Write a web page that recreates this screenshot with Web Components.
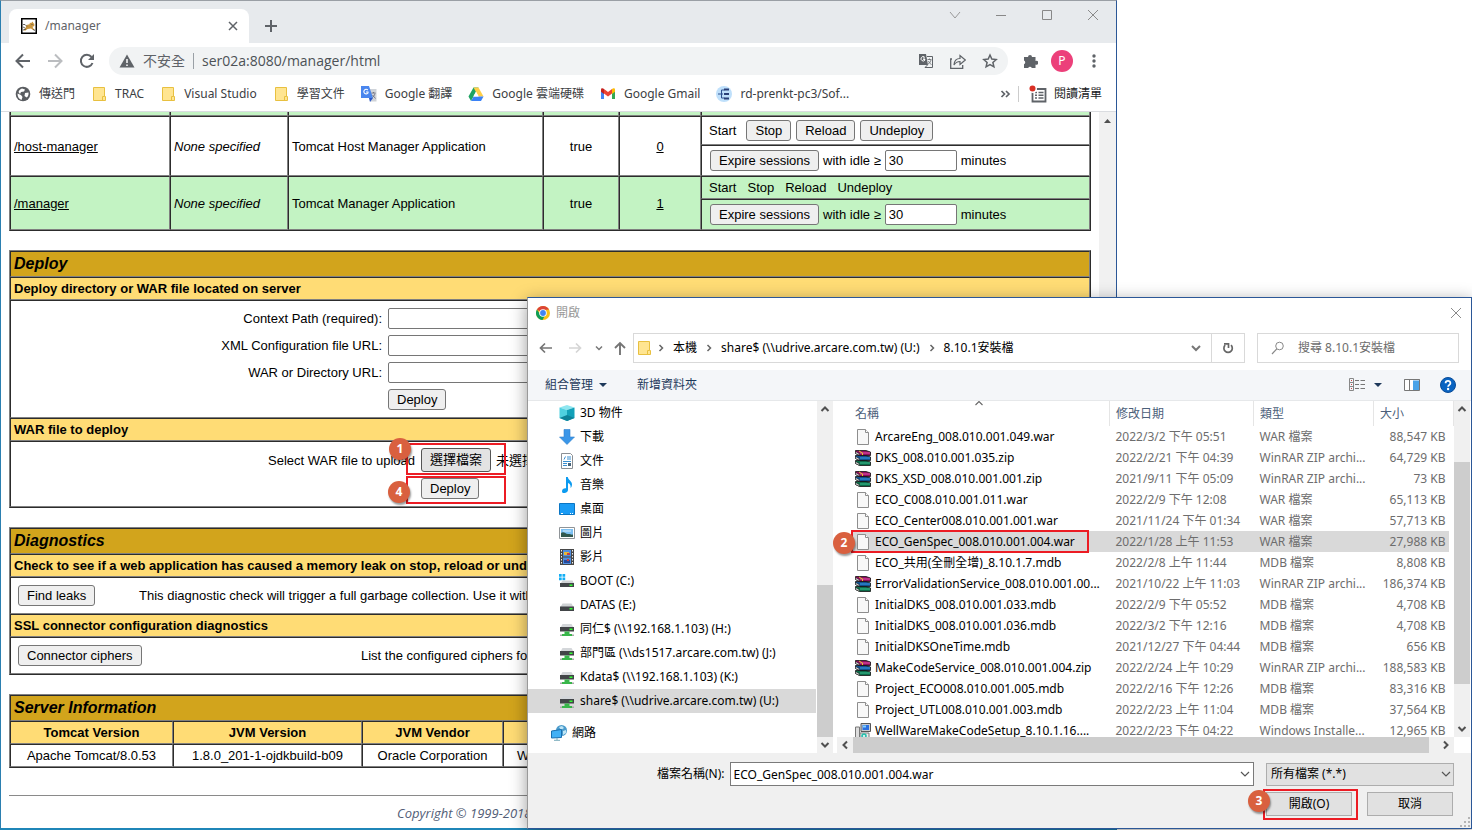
<!DOCTYPE html>
<html lang="zh-Hant">
<head>
<meta charset="utf-8">
<title>/manager</title>
<style>
html, body { margin: 0; background: #fff; }
body { font-family: "Noto Sans", "Noto Sans CJK TC", sans-serif; font-size: 12px; line-height: 16px; color: #000; }
</style>
</head>
<body>
<desk-top></desk-top>
<script>
const define = (name, html, after) => {
  const tpl = document.createElement('template');
  tpl.innerHTML = html;
  customElements.define(name, class extends HTMLElement {
    constructor() {
      super();
      this.attachShadow({ mode: 'open' }).append(tpl.content.cloneNode(true));
    }
    connectedCallback() { if (after && !this.ready) { this.ready = true; after(this, this.shadowRoot); } }
  });
};

/* ---------- icons: [viewBox width, height, markup] ---------- */
const book = (y, light, dark) => `<path d="M.5 ${y + .5}h10.500l4.500 1.500v3.500H4.500L.5 ${y + 3.500}z" fill="${dark}" stroke="#111" stroke-width=".8"/><path d="M5 ${y + 3}h10" stroke="${light}" stroke-width="1.500"/><path d="M.5 ${y + 1.500}l3.800 2.200v1.500L.5 ${y + 3.500}z" fill="#e8e8e8" stroke="#111" stroke-width=".5"/>`;
const ICONS = {
  tomcat: [16, 16, '<rect x=".75" y=".75" width="14.500" height="14.500" fill="#fff" stroke="#000" stroke-width="1.500"/><path d="M9 4.500l1 .7 1.500-1.700.8 1.500 1 1v2l-1.800.8 1 2 1.500 1.200h-2l-2-1.500-3.500.5-2 1.500H2.500l2-2.500 1-3 3-.8z" fill="#c9963f"/><path d="M2 6.500h2l2 2M2 9l2 1M2 12l3-1M10.500 6.500h1M12 11.500l2 1" stroke="#444" stroke-width=".8" fill="none"/>'],
  close: [16, 16, '<path d="M4 4l8 8M12 4l-8 8" stroke="#5f6368" stroke-width="1.500"/>'],
  plus: [16, 16, '<path d="M8 2v12M2 8h12" stroke="#5f6368" stroke-width="2"/>'],
  wdown: [16, 16, '<path d="M3 5l5 6 5-6" stroke="#999" fill="none"/>'],
  wmin: [16, 16, '<path d="M3 8.500h10" stroke="#888"/>'],
  wmax: [16, 16, '<path d="M3.500 3.500h9v9h-9z" stroke="#888" fill="none"/>'],
  wclose: [16, 16, '<path d="M3 3l10 10M13 3L3 13" stroke="#8a8a8a"/>'],
  back: [16, 16, '<path d="M15 8H2M8 1.500L1.500 8 8 14.500" fill="none" stroke="#5f6368" stroke-width="2"/>'],
  fwd: [16, 16, '<path d="M1 8h13M8 1.500L14.500 8 8 14.500" fill="none" stroke="#bbbdc0" stroke-width="2"/>'],
  reload: [16, 16, '<path d="M13.500 10A6 6 0 1 1 12.500 4" fill="none" stroke="#5f6368" stroke-width="2"/><path d="M15 1v6H9z" fill="#5f6368"/>'],
  warn: [16, 16, '<path d="M8 1.500L15.500 14.500H.5z" fill="#5f6368"/><path d="M8 6v4M8 11.500v1.500" stroke="#fff" stroke-width="1.500"/>'],
  trans: [16, 16, '<path d="M1 1h7l2 11H1z" fill="#5f6368"/><path d="M9 3.500h5.500v11H7L9.500 12" fill="none" stroke="#5f6368"/><path d="M7 5H5M6.500 4A2.200 2.200 0 1 0 7 7V6.500H5.200" stroke="#fff" fill="none"/><path d="M9.500 6.500h4M11.500 5.500v1M13 7c-.5 2-2 4-3 4M10.500 8c.5 1.500 2 3 3 3.500" stroke="#5f6368" fill="none" stroke-width=".8"/>'],
  share: [16, 16, '<path d="M2 6H.7v9.300h12V12" fill="none" stroke="#5f6368" stroke-width="1.300"/><path d="M4 12c.3-5 3-6.500 6-6.500V2.500L15.300 7 10 11.500v-3C7.500 8.500 5.500 9.500 4 12z" fill="none" stroke="#5f6368" stroke-width="1.200"/>'],
  star: [16, 16, '<path d="M8 2l1.800 4 4.400.5-3.300 3 1 4.300L8 11.600l-3.900 2.200 1-4.300-3.300-3L6.200 6z" fill="none" stroke="#5f6368" stroke-width="1.500"/>'],
  puzzle: [16, 16, '<path d="M2 4h4a2 2 0 1 1 4 0h3.500v4a2 2 0 1 1 0 3.600V15H9.800a2 2 0 0 0-3.600 0H2v-3.800a2 2 0 0 0 0-3.700z" fill="#5f6368"/>'],
  dots: [16, 16, '<g fill="#5f6368"><circle cx="8" cy="3" r="1.700"/><circle cx="8" cy="8" r="1.700"/><circle cx="8" cy="13" r="1.700"/></g>'],
  globe: [16, 16, '<circle cx="8" cy="8" r="7.300" fill="#5a5d61"/><path d="M2.500 7.500L6 9l1.500 2-1 3C4 13 2.500 11 2.500 7.500zM7 2.500l3 1-1 2-3 .5L5 8 3.500 6C4 4 5.500 3 7 2.500zM10 7l3.500-.5c.3 2.500-.5 4-1.800 5L9.500 10z" fill="#fff"/>'],
  folder: [16, 16, '<path d="M2.500 1.500h11v9h1v4h-12z" fill="#ffe591" stroke="#e8c040"/><path d="M11.500 14.500v-4h2" stroke="#e8c040" fill="none"/>'],
  gtrans: [16, 16, '<path d="M7 3h8.500v12.500H9z" fill="#cfd3d8"/><path d="M0 0h8l4 12H0z" fill="#4a86ee"/><path d="M8 12h4l-3 4z" fill="#2a56c6"/><path d="M6.800 4A2.300 2.300 0 1 0 7 7V6H5" stroke="#fff" fill="none" stroke-width="1.100"/><path d="M10.500 7h4M12.500 6v1M14 7.500c-.5 2-1.500 3-2.500 4M11.500 9l3 3.500" stroke="#667" fill="none" stroke-width=".8"/>'],
  drive: [16, 16, '<path d="M5.500 1.500h5L8 6 3 15 .5 10.500z" fill="#1ea362"/><path d="M10.500 1.500l5 9h-5L5.500 1.500z" fill="#ffcf48"/><path d="M5.700 10.500h9.800L13 15H3z" fill="#3b82f6"/><path d="M8 5.500l2.700 5H5.300z" fill="#fff"/>'],
  gmail: [16, 16, '<path d="M1 4v9h3V7z" fill="#4285f4"/><path d="M15 4v9h-3V7z" fill="#34a853"/><path d="M1 3.500C1 2 3 2 4 3v5L1 5.700z" fill="#c5221f"/><path d="M15 3.500C15 2 13 2 12 3v5l3-2.300z" fill="#fbbc04"/><path d="M4 3l4 3 4-3v4.500L8 10.500l-4-3z" fill="#ea4335"/>'],
  svn: [16, 16, '<circle cx="8" cy="8" r="8" fill="#bfe0fb"/><path d="M2 8h5M5.500 4v8M5.500 4h3M5.500 12h3" stroke="#2d4f8e" fill="none"/><path d="M8 3.500h5M8 8h5M8 12.500h5" stroke="#2a3f78" stroke-width="2.200"/>'],
  more: [16, 16, '<path d="M4.500 5l3 3-3 3M9 5l3 3-3 3" fill="none" stroke="#5f6368" stroke-width="1.700"/>'],
  list: [18, 18, '<path d="M3.500 4h13v12.500h-13z" fill="none" stroke="#5f6368" stroke-width="1.800"/><path d="M6 7.500h2M9.500 7.500h5M6 10.300h2M9.500 10.300h5M6 13h2M9.500 13h5" stroke="#5f6368" stroke-width="1.500"/><circle cx="4" cy="4" r="4" fill="#fff"/><circle cx="3.500" cy="3.500" r="3" fill="#d93025"/>'],
  chrome: [16, 16, '<circle cx="8" cy="8" r="7" fill="#fbc116"/><path d="M8 8L1.900 4.500A7 7 0 0 1 14.100 4.500L8 5z" fill="#db4437"/><path d="M1.900 4.500A7 7 0 0 0 7.500 15l3-5.500L5 9z" fill="#0f9d58"/><circle cx="8" cy="8" r="3.800" fill="#fff"/><circle cx="8" cy="8" r="2.900" fill="#4285f4"/>'],
  dback: [16, 16, '<path d="M14 8H2.500M7 3.500L2.500 8 7 12.500" fill="none" stroke="#757575" stroke-width="1.700"/>'],
  dfwd: [16, 16, '<path d="M2 8h11.500M9 3.500L13.500 8 9 12.500" fill="none" stroke="#d5d5d5" stroke-width="1.700"/>'],
  dup: [16, 16, '<path d="M8 15V3M3 8l5-5 5 5" fill="none" stroke="#757575" stroke-width="1.900"/>'],
  small: [8, 8, '<path d="M1 2.500l3 3 3-3" fill="none" stroke="#777" stroke-width="1.500"/>'],
  crumb: [8, 8, '<path d="M2.500 1L5.500 4 2.500 7" fill="none" stroke="#666" stroke-width="1.500"/>'],
  down: [16, 16, '<path d="M4 6l4 4 4-4" fill="none" stroke="#777" stroke-width="2"/>'],
  thin: [16, 16, '<path d="M4 6l4 4 4-4" fill="none" stroke="#555" stroke-width="1.200"/>'],
  thinup: [16, 8, '<path d="M4.500 6L8 2.500 11.500 6" fill="none" stroke="#666" stroke-width="1.100"/>'],
  refresh: [16, 16, '<path d="M11 5.200A4.200 4.200 0 1 1 5.200 5.200" fill="none" stroke="#666" stroke-width="1.700"/><path d="M4 3.800h4.500V8" fill="none" stroke="#666" stroke-width="1.700"/>'],
  search: [16, 16, '<circle cx="9.500" cy="6" r="3.800" fill="none" stroke="#888"/><path d="M6.800 8.800L2 14" stroke="#888" stroke-width="1.200"/>'],
  caret: [8, 8, '<path d="M0 2h8L4 6z" fill="#1e395b"/>'],
  view: [17, 14, '<path d="M.5.5h4v12h-4zM.5 4.500h4M.5 8.500h4" fill="none" stroke="#888"/><path d="M6 2.500h4M11.500 2.500h4.500M6 6.500h4M11.500 6.500h4.500M6 10.500h4M11.500 10.500h4.500" stroke="#777"/><path d="M2 2h1v1H2zM2 6h1v1H2zM2 10h1v1H2z" fill="#c44"/>'],
  pane: [16, 14, '<path d="M.5 1.500h15v11H.5z" fill="#fff" stroke="#777"/><path d="M.5 1.500h15M5.500 2v10" stroke="#777"/><path d="M9 2.500h6v9.500H9z" fill="#4aa3e8"/>'],
  help: [16, 16, '<circle cx="8" cy="8" r="7.500" fill="#0a64c2" stroke="#0a4c98"/><path d="M5.600 6.200c0-3 4.800-3 4.800 0 0 1.700-2.300 1.700-2.300 3.600" fill="none" stroke="#fff" stroke-width="1.800"/><circle cx="8.100" cy="12" r="1.200" fill="#fff"/>'],
  cube: [16, 16, '<path d="M8 0l7.500 2.500L8 5 .5 2.500z" fill="#8fe6f0"/><path d="M.5 2.500L8 5v11L.5 13z" fill="#4fd0e0"/><path d="M15.500 2.500L8 5v11l7.500-3z" fill="#12a0b8"/><path d="M.5 13L8 10l7.500 3L8 16z" fill="#0d8198"/>'],
  dl: [16, 16, '<path d="M5 .5h6V8h4.500L8 15.500.5 8H5z" fill="#3a96e8" stroke="#2f80cc" stroke-width=".6"/>'],
  doc: [16, 16, '<path d="M2.500.5h9l2 2v13h-11z" fill="#fff" stroke="#8a8f94"/><path d="M8 4h4M8 6h4M4 8.500h8M4 10.500h4M4 12.500h4" stroke="#3a8fd0"/><path d="M5 6.500l1.500-3" stroke="#3a8fd0"/><path d="M9 10h3v3H9z" fill="#48647a"/>'],
  music: [16, 16, '<path d="M7 0h1.800c.3 3 4.200 4 4.200 7.500 0 1.500-.7 3-1.500 3.500.5-3-.8-4.500-2.500-5v7c0 3-6 4.500-6 1.500C3 12 5 11 7 11.300z" fill="#0c9bf0"/>'],
  desk: [16, 16, '<path d="M.5 2.500h15v11H.5z" fill="#1a9cf5" stroke="#0b76c4"/><path d="M2 12.500h2M11 12.500h1M13 12.500h1" stroke="#fff"/>'],
  pic: [16, 16, '<path d="M.5 2.500h15v11H.5z" fill="#fff" stroke="#8f9498"/><path d="M2 4h12v8H2z" fill="#7cc0f2"/><path d="M2 8c3-2 4 1 7 1s3 1 5 .5V12H2z" fill="#31584e"/><path d="M4 5.500h8v1H4z" fill="#dff1ff"/>'],
  film: [16, 16, '<path d="M1 0h14v16H1z" fill="#474747"/><path d="M4 1h8v6.500H4zM4 8.500h8V15H4z" fill="#4f8ee0"/><path d="M5 3h5v3H5z" fill="#e8b83a"/><path d="M5 11h6v3H5z" fill="#264a9a"/><path d="M8 4h3v2H8zM8 10h2v2H8z" fill="#c94040"/><path d="M2.500 1v14M13.500 1v14" stroke="#eee" stroke-dasharray="1.500 1.500"/>'],
  boot: [16, 16, '<path d="M0 1h2.700v2.700H0zM3.500 1h2.700v2.700H3.500zM0 4.500h2.700v2.700H0zM3.500 4.500h2.700v2.700H3.500z" fill="#12aef5"/><path d="M3.500 7.500h10l1.500 3H1.500z" fill="#cfd2d4"/><rect x="1" y="10" width="14" height="4" fill="#424548"/><rect x="10.500" y="11.500" width="3" height="1.500" fill="#3f3"/>'],
  disk: [16, 16, '<path d="M3.500 6.500h9l2 3.500h-13z" fill="#cfd2d4"/><rect x="1" y="9.500" width="14" height="4.500" fill="#424548"/><rect x="10.500" y="11" width="3" height="1.500" fill="#3f3"/>'],
  server: [16, 16, '<path d="M3.500 3h9l2 3.500h-13z" fill="#d4d7da"/><rect x="1" y="6" width="14" height="4.500" fill="#424548"/><rect x="10.500" y="7.500" width="3" height="1.500" fill="#3f3"/><path d="M5.500 10.500h5V13H13v2H3v-2h2.500z" fill="#38b64a"/><path d="M1 13.500h2V15H1zM13 13.500h2V15h-2z" fill="#aaa"/>'],
  net: [16, 16, '<circle cx="10.500" cy="5.500" r="5.500" fill="#4c9ccc"/><path d="M8 2l3-1 2 2-3 2zM12 6l3-1v3l-3 2z" fill="#bfe5f5"/><path d="M.5 6l10-1.500v8L.5 13z" fill="#42b0f5" stroke="#1a6fb0"/><path d="M6 13v2M3 15.300h6" stroke="#7ab"/>'],
  file: [16, 16, '<path d="M2.500.5h8l3 3v12h-11z" fill="#f8f8f8" stroke="#8e8e8e"/><path d="M10.500.5v3h3" fill="#fff" stroke="#8e8e8e"/>'],
  rar: [16, 16, book(10, '#2fa87c', '#0b6a48') + book(5, '#2f86d0', '#10508c') + book(0, '#d0409a', '#8c0e5a') + '<path d="M4 1l3.500 2v2" stroke="#e9c22e" fill="none"/>'],
  msi: [16, 16, '<path d="M6 .5h9.500v8H6z" fill="#c8ccd0" stroke="#555"/><path d="M7.500 2h6.500v5H7.500z" fill="#2b6fe0"/><path d="M8 2.500h3v2H8z" fill="#7fd3ff"/><path d="M.5 4h4v11h-4z" fill="#ddd" stroke="#777"/><path d="M5 10h9v6H5z" fill="#eee" stroke="#777"/><circle cx="9" cy="13" r="2.800" fill="#2cbfae"/><circle cx="9" cy="13" r="1" fill="#fff"/>'],
  aup: [16, 16, '<path d="M4.500 10L8 6.500 11.500 10" fill="none" stroke="#505050" stroke-width="2"/>'],
  adown: [16, 16, '<path d="M4.500 6L8 9.500 11.500 6" fill="none" stroke="#505050" stroke-width="2"/>'],
  aleft: [16, 16, '<path d="M10 4.500L6.500 8l3.500 3.500" fill="none" stroke="#505050" stroke-width="2"/>'],
  aright: [16, 16, '<path d="M6 4.500L9.500 8 6 11.500" fill="none" stroke="#505050" stroke-width="2"/>'],
  solidup: [17, 17, '<path d="M5 11h7L8.500 7z" fill="#505050"/>'],
  grip: [12, 12, '<path d="M9 1h2v2H9zM9 5h2v2H9zM9 9h2v2H9zM5 5h2v2H5zM5 9h2v2H5zM1 9h2v2H1z" fill="#b4b4b4"/>']
};
define('ui-icon', '<style>:host{display:block;flex:none}svg{display:block}</style>', (host, root) => {
  const [w, h, body] = ICONS[host.getAttribute('name')];
  root.innerHTML += `<svg width="${w}" height="${h}" viewBox="0 0 ${w} ${h}" aria-hidden="true">${body}</svg>`;
});

/* ---------- numbered callout around its content ---------- */
define('step-mark', `<style>
:host{display:block;position:relative;width:max-content}
.frame{position:absolute;inset:var(--frame,-3px);border:2px solid #ec1c24;pointer-events:none;z-index:2}
.num{position:absolute;left:var(--bx,-18px);top:var(--by,-6px);width:22px;height:22px;border-radius:50%;background:#d9603f;color:#fff;font:bold 12px/22px "Open Sans",sans-serif;text-align:center;box-shadow:1px 2px 2px #0006;z-index:3}
</style><slot></slot><div class="frame"></div><div class="num"></div>`,
(h, r) => r.querySelector('.num').textContent = h.getAttribute('n'));

/* ---------- browser chrome ---------- */
define('bookmark-item', `<style>
:host{display:block}a{display:flex;gap:8px;align-items:center;color:#3c4043;text-decoration:none;white-space:nowrap}
</style><a href="#"><slot name="icon"></slot><slot></slot></a>`);

define('browser-tabs', `<style>
:host{display:flex;height:42px;background:#e7eaed;align-items:flex-end;padding-left:8px}
.tab{display:flex;align-items:center;width:240px;height:34px;box-sizing:border-box;padding:0 8px 0 12px;gap:8px;background:#fff;border-radius:8px 8px 0 0;color:#5f6368}
.tab span{flex:1}
button{border:0;background:none;padding:0;font:inherit}
.add{padding:0 14px;align-self:center;margin-top:8px}
.win{display:flex;gap:30px;margin-left:auto;align-self:flex-start;padding:6px 15px 0 0}
</style>
<div class="tab"><ui-icon name="tomcat"></ui-icon><span>/manager</span><button aria-label="關閉分頁"><ui-icon name="close"></ui-icon></button></div>
<button class="add" aria-label="新分頁"><ui-icon name="plus"></ui-icon></button>
<div class="win"><button aria-label="搜尋分頁"><ui-icon name="wdown"></ui-icon></button><button aria-label="最小化"><ui-icon name="wmin"></ui-icon></button><button aria-label="最大化"><ui-icon name="wmax"></ui-icon></button><button aria-label="關閉"><ui-icon name="wclose"></ui-icon></button></div>`);

define('browser-toolbar', `<style>
:host{display:flex;align-items:center;height:36px;padding:0 14px;gap:16px;background:#fff}
button{border:0;background:none;padding:0;font:inherit}
.omni{flex:1;display:flex;align-items:center;height:28px;background:#f1f3f4;border-radius:14px;padding:0 10px;gap:8px;font:14px/28px "Open Sans","Noto Sans CJK TC",sans-serif;color:#5f6368;margin:0 -2px}
.omni b{font-weight:400;white-space:nowrap}
.sep{width:1px;height:16px;background:#9aa0a6}
input{flex:1;min-width:0;border:0;background:none;font:inherit;color:#4c5156;padding:0}
.tools{display:flex;gap:16px}
.avatar{width:22px;height:22px;border-radius:50%;background:#ec407a;color:#fff;font-size:12px;line-height:22px;text-align:center;margin:0 -3px}
</style>
<button aria-label="上一頁"><ui-icon name="back"></ui-icon></button><button aria-label="下一頁"><ui-icon name="fwd"></ui-icon></button><button aria-label="重新載入"><ui-icon name="reload"></ui-icon></button>
<div class="omni"><ui-icon name="warn"></ui-icon><b>不安全</b><i class="sep"></i><input aria-label="網址" value="ser02a:8080/manager/html"><div class="tools"><ui-icon name="trans"></ui-icon><ui-icon name="share"></ui-icon><ui-icon name="star"></ui-icon></div></div>
<button aria-label="擴充功能"><ui-icon name="puzzle"></ui-icon></button><button class="avatar">P</button><button aria-label="選單"><ui-icon name="dots"></ui-icon></button>`);

define('bookmark-bar', `<style>
:host{display:flex;align-items:center;height:30px;padding:0 14px 2px;gap:16px;background:#fff;border-bottom:1px solid #dadce0;color:#3c4043}
.end{display:flex;align-items:center;gap:5px;margin-left:auto}
.sep{width:1px;height:16px;background:#ccc;margin-right:5px}
a{display:flex;gap:7px;align-items:center;color:#202124;text-decoration:none;white-space:nowrap}
</style>
<bookmark-item><ui-icon slot="icon" name="globe"></ui-icon>傳送門</bookmark-item>
<bookmark-item><ui-icon slot="icon" name="folder"></ui-icon>TRAC</bookmark-item>
<bookmark-item><ui-icon slot="icon" name="folder"></ui-icon>Visual Studio</bookmark-item>
<bookmark-item><ui-icon slot="icon" name="folder"></ui-icon>學習文件</bookmark-item>
<bookmark-item><ui-icon slot="icon" name="gtrans"></ui-icon>Google 翻譯</bookmark-item>
<bookmark-item><ui-icon slot="icon" name="drive"></ui-icon>Google 雲端硬碟</bookmark-item>
<bookmark-item><ui-icon slot="icon" name="gmail"></ui-icon>Google Gmail</bookmark-item>
<bookmark-item><ui-icon slot="icon" name="svn"></ui-icon>rd-prenkt-pc3/Sof...</bookmark-item>
<div class="end"><ui-icon name="more"></ui-icon><i class="sep"></i><a href="#"><ui-icon name="list"></ui-icon>閱讀清單</a></div>`);

/* ---------- Tomcat manager page ---------- */
const tableCss = `
table{width:100%;table-layout:fixed;box-sizing:border-box;border:1px outset #808080}
td,th{box-sizing:border-box;height:23px;padding:0 3px;border:1px inset #808080;text-align:left;white-space:nowrap}
.title td{height:26px;background:#d2a41c;font:italic bold 16px/20px "Liberation Sans",sans-serif}
.head td,.head th{background:#ffdc75;font-weight:bold}
button{font:inherit;line-height:17px;height:21px;box-sizing:border-box;padding:0 7px;border:1px solid #767676;border-radius:3px;background:#efefef;color:#000;white-space:nowrap}
input{font:inherit;height:21px;box-sizing:border-box;padding:0 3px;border:1px solid #767676;border-radius:2px;background:#fff}
`;
define('app-list', `<style>:host{display:block}${tableCss}
table,.cut td{border-top:0}
.cut td{height:4px;padding:0}
.alt td,.cut td{background:#c3f3c3}
a{color:#000}
.c{text-align:center}
.cmd{height:29px}.idle{height:31px}
.row{display:flex;align-items:center;gap:5px;padding-left:4px}
.row span{margin-right:5px}.row button,form button{padding:0 8px}.plain span{margin-right:6px}
form{display:flex;align-items:center;gap:4px;margin:0;padding-left:5px}
input{width:72px}
</style>
<table cellspacing="0"><colgroup><col style="width:160px"><col style="width:118px"><col style="width:255px"><col style="width:76px"><col style="width:82px"><col></colgroup>
<tr class="cut"><td></td><td></td><td></td><td></td><td></td><td></td></tr>
<tr><td rowspan="2"><a href="#">/host-manager</a></td><td rowspan="2"><i>None specified</i></td><td rowspan="2">Tomcat Host Manager Application</td><td rowspan="2" class="c">true</td><td rowspan="2" class="c"><a href="#">0</a></td>
<td class="cmd"><div class="row"><span>Start</span><button>Stop</button><button>Reload</button><button>Undeploy</button></div></td></tr>
<tr><td class="idle"><form><button type="button">Expire sessions</button><label for="i1">with idle ≥</label><input id="i1" value="30"><span>minutes</span></form></td></tr>
<tr class="alt"><td rowspan="2"><a href="#">/manager</a></td><td rowspan="2"><i>None specified</i></td><td rowspan="2">Tomcat Manager Application</td><td rowspan="2" class="c">true</td><td rowspan="2" class="c"><a href="#">1</a></td>
<td><div class="row plain"><span>Start</span><span>Stop</span><span>Reload</span><span>Undeploy</span></div></td></tr>
<tr class="alt"><td class="idle"><form><button type="button">Expire sessions</button><label for="i2">with idle ≥</label><input id="i2" value="30"><span>minutes</span></form></td></tr>
</table>`);

define('deploy-panel', `<style>:host{display:block}${tableCss}
.dir{height:118px}.up{height:66px}
form{display:grid;grid-template-columns:368px 1fr;column-gap:6px;grid-auto-rows:27px;align-items:center;margin:0}
.up form{grid-template-columns:401px 1fr;grid-auto-rows:28px}
label{text-align:right}
input{width:340px}
button{padding:0 8px}
.pick{display:flex;align-items:center;gap:5px}
.pick button{height:24px;background:#e3e3e3;border-color:#555;line-height:20px}
.file{--frame:-5px -15px -3px -15px;--bx:-32px;--by:-10px}
.send{--frame:-2px -27px -5px -15px;--bx:-33px;--by:3px}
.deploy{display:block}
</style>
<table cellspacing="0">
<tr class="title"><td>Deploy</td></tr>
<tr class="head"><td>Deploy directory or WAR file located on server</td></tr>
<tr><td class="dir"><form><label for="cp">Context Path (required):</label><input id="cp"><label for="xc">XML Configuration file URL:</label><input id="xc"><label for="wd">WAR or Directory URL:</label><input id="wd"><span></span><div><button type="button">Deploy</button></div></form></td></tr>
<tr class="head"><td>WAR file to deploy</td></tr>
<tr><td class="up"><form><label for="wf">Select WAR file to upload</label><div class="pick"><step-mark class="file" n="1"><button type="button" id="wf">選擇檔案</button></step-mark><span>未選擇任何檔案</span></div><span></span><step-mark class="send" n="4"><button type="button" class="deploy">Deploy</button></step-mark></form></td></tr>
</table>`);

define('diagnostics-panel', `<style>:host{display:block}${tableCss}
.act{height:37px}
.act div{display:grid;grid-template-columns:var(--col) 1fr;align-items:center;padding-left:4px}
.act button{width:max-content;padding:0 8px}
</style>
<table cellspacing="0">
<tr class="title"><td>Diagnostics</td></tr>
<tr class="head"><td>Check to see if a web application has caused a memory leak on stop, reload or undeploy</td></tr>
<tr><td class="act"><div style="--col:121px"><button>Find leaks</button><span>This diagnostic check will trigger a full garbage collection. Use it with extreme caution on production systems.</span></div></td></tr>
<tr class="head"><td>SSL connector configuration diagnostics</td></tr>
<tr><td class="act"><div style="--col:343px"><button>Connector ciphers</button><span>List the configured ciphers for each connector</span></div></td></tr>
</table>`);

define('server-info', `<style>:host{display:block}${tableCss}
.head th,.data td{text-align:center}
</style>
<table cellspacing="0"><colgroup><col style="width:163px"><col style="width:189px"><col style="width:141px"><col style="width:155px"><col></colgroup>
<tr class="title"><td colspan="5">Server Information</td></tr>
<tr class="head"><th>Tomcat Version</th><th>JVM Version</th><th>JVM Vendor</th><th>OS Name</th><th>OS Version</th></tr>
<tr class="data"><td>Apache Tomcat/8.0.53</td><td>1.8.0_201-1-ojdkbuild-b09</td><td>Oracle Corporation</td><td>Windows Server 2012</td><td>6.2</td></tr>
</table>`);

define('manager-page', `<style>
:host{display:grid;grid-template-columns:1fr 17px;overflow:hidden;background:#fff;font:13px/17px "Liberation Sans","Noto Sans CJK TC",sans-serif}
main{display:flex;flex-direction:column;gap:19px;padding:0 8px;min-width:0}
aside{background:#f1f1f1}
footer{border-top:1px solid #8a8a8a;margin-top:8px;padding-top:9px;text-align:center;color:#525d76;font:italic 13px/16px "Open Sans",sans-serif}
</style>
<main><app-list></app-list><deploy-panel></deploy-panel><diagnostics-panel></diagnostics-panel><server-info></server-info>
<footer>Copyright © 1999-2018, Apache Software Foundation</footer></main>
<aside><ui-icon name="solidup"></ui-icon></aside>`);

define('browser-window', `<style>
:host{display:grid;grid-template-rows:auto auto auto 1fr;border:1px solid #2b7fb0;border-top-color:#9a9fa5;border-right-color:#2b5797;border-bottom:2px solid #1f86b8;background:#fff;min-width:0}
</style><browser-tabs></browser-tabs><browser-toolbar></browser-toolbar><bookmark-bar></bookmark-bar><manager-page></manager-page>`);

/* ---------- file dialog ---------- */
define('dialog-nav', `<style>
:host{display:flex;align-items:center;height:30px;padding:6px 12px 7px 10px;gap:12px}
button{border:0;background:none;padding:0;font:inherit}
.arrows{display:flex;align-items:center;width:83px}
.back{margin-right:13px}.fwd{margin-right:12px}.recent{margin-right:9px}
.path{flex:1;display:flex;align-items:center;height:30px;box-sizing:border-box;border:1px solid #d9d9d9;padding-left:2px}
.path span{white-space:nowrap}
.path .crumb{margin:0 8px}
.path .first{margin:0 8px 0 5px}
.drop{margin-left:auto;padding:0 7px}
.ref{border-left:1px solid #d9d9d9;height:28px;padding:0 8px}
.find{display:flex;align-items:center;width:202px;height:30px;box-sizing:border-box;border:1px solid #d9d9d9;padding:0 12px;gap:12px}
input{border:0;flex:1;min-width:0;font:inherit;padding:0}
input::placeholder{color:#6d6d6d;opacity:1}
</style>
<div class="arrows"><button class="back" aria-label="返回"><ui-icon name="dback"></ui-icon></button><button class="fwd" aria-label="前進"><ui-icon name="dfwd"></ui-icon></button><button class="recent" aria-label="最近"><ui-icon name="small"></ui-icon></button><button aria-label="上移"><ui-icon name="dup"></ui-icon></button></div>
<div class="path"><ui-icon name="folder"></ui-icon><ui-icon class="first" name="crumb"></ui-icon><span>本機</span><ui-icon class="crumb" name="crumb"></ui-icon><span>share$ (\\\\udrive.arcare.com.tw) (U:)</span><ui-icon class="crumb" name="crumb"></ui-icon><span>8.10.1安裝檔</span><button class="drop" aria-label="展開"><ui-icon name="down"></ui-icon></button><button class="ref" aria-label="重新整理"><ui-icon name="refresh"></ui-icon></button></div>
<div class="find"><ui-icon name="search"></ui-icon><input aria-label="搜尋" placeholder="搜尋 8.10.1安裝檔"></div>`);

define('scroll-bar', `<style>
:host{display:flex;flex-direction:column;width:16px;background:#f0f0f0;box-sizing:border-box}
:host([horizontal]){flex-direction:row;width:auto;height:16px}
.track{flex:1;display:flex;flex-direction:inherit}
.a{flex:var(--before,0)}.t{flex:var(--thumb,1);background:#cdcdcd}.z{flex:var(--after,0)}
</style><slot name="start"></slot><div class="track"><div class="a"></div><div class="t"></div><div class="z"></div></div><slot name="end"></slot>`);

const FILES = [
  ['file', 'ArcareEng_008.010.001.049.war', '2022/3/2 下午 05:51', 'WAR 檔案', '88,547 KB'],
  ['rar', 'DKS_008.010.001.035.zip', '2022/2/21 下午 04:39', 'WinRAR ZIP archi...', '64,729 KB'],
  ['rar', 'DKS_XSD_008.010.001.001.zip', '2021/9/11 下午 05:09', 'WinRAR ZIP archi...', '73 KB'],
  ['file', 'ECO_C008.010.001.011.war', '2022/2/9 下午 12:08', 'WAR 檔案', '65,113 KB'],
  ['file', 'ECO_Center008.010.001.001.war', '2021/11/24 下午 01:34', 'WAR 檔案', '57,713 KB'],
  ['file', 'ECO_GenSpec_008.010.001.004.war', '2022/1/28 上午 11:53', 'WAR 檔案', '27,988 KB'],
  ['file', 'ECO_共用(全刪全增)_8.10.1.7.mdb', '2022/2/8 上午 11:44', 'MDB 檔案', '8,808 KB'],
  ['rar', 'ErrorValidationService_008.010.001.00...', '2021/10/22 上午 11:03', 'WinRAR ZIP archi...', '186,374 KB'],
  ['file', 'InitialDKS_008.010.001.033.mdb', '2022/2/9 下午 05:52', 'MDB 檔案', '4,708 KB'],
  ['file', 'InitialDKS_008.010.001.036.mdb', '2022/3/2 下午 12:16', 'MDB 檔案', '4,708 KB'],
  ['file', 'InitialDKSOneTime.mdb', '2021/12/27 下午 04:44', 'MDB 檔案', '656 KB'],
  ['rar', 'MakeCodeService_008.010.001.004.zip', '2022/2/24 上午 10:29', 'WinRAR ZIP archi...', '188,583 KB'],
  ['file', 'Project_ECO008.010.001.005.mdb', '2022/2/16 下午 12:26', 'MDB 檔案', '83,316 KB'],
  ['file', 'Project_UTL008.010.001.003.mdb', '2022/2/23 上午 11:04', 'MDB 檔案', '37,564 KB'],
  ['msi', 'WellWareMakeCodeSetup_8.10.1.16....', '2022/2/23 下午 04:22', 'Windows Installe...', '12,965 KB']
];
define('file-list', `<style>
:host{display:block;height:336px;overflow:hidden;position:relative;padding-left:20px}
.sort{position:absolute;left:138px;top:-2px}
table{border-collapse:collapse;table-layout:fixed;width:100%}
th{height:25px;padding:0;font-weight:400;text-align:left;color:#4c607a;border-right:1px solid #e5e5e5}
th:first-child{padding-left:2px}
th+th{padding-left:6px}
td{height:21px;padding:0 0 0 6px;color:#6d6d6d;white-space:nowrap}
td:first-child{color:#000;padding-left:2px}
td:nth-child(4){text-align:right;padding:0 4px 0 0}
.sel td:not(:last-child){background:#d9d9d9}
.name{display:flex;align-items:center;gap:4px;height:21px}
step-mark{width:234px;--frame:-1px 0 -1px -4px;--bx:-22px;--by:1px}
</style>
<ui-icon class="sort" name="thinup"></ui-icon>
<table><colgroup><col><col style="width:144px"><col style="width:120px"><col style="width:76px"><col style="width:4px"></colgroup>
<thead><tr><th>名稱</th><th>修改日期</th><th>類型</th><th colspan="2">大小</th></tr></thead><tbody></tbody></table>`,
(host, root) => {
  root.querySelector('tbody').innerHTML = FILES.map(([icon, name, date, type, size], i) => {
    const cell = `<div class="name"><ui-icon name="${icon}"></ui-icon>${name}</div>`;
    return `<tr${i === 5 ? ' class="sel"' : ''}><td>${i === 5 ? `<step-mark n="2">${cell}</step-mark>` : cell}</td><td>${date}</td><td>${type}</td><td>${size}</td><td></td></tr>`;
  }).join('');
});

define('dialog-footer', `<style>
:host{display:grid;grid-template-columns:1fr auto;row-gap:5px;column-gap:12px;padding:9px 17px 12px 129px;background:#f0f0f0;height:54px;position:relative}
.name{display:flex;align-items:center;gap:5px}
.combo{flex:1;display:flex;align-items:center;height:24px;box-sizing:border-box;border:1px solid #7a7a7a;background:#fff}
input{flex:1;min-width:0;border:0;font:inherit;padding:1px 0 0 3px}
.type{display:grid;align-items:center;width:188px;height:24px}
select{grid-area:1/1;width:100%;height:23px;appearance:none;border:1px solid #adadad;background:#e1e1e1;font:inherit;padding:0 4px;color:#000}
.type ui-icon{grid-area:1/1;justify-self:end}
.btns{grid-column:2;display:flex;justify-content:space-between;padding-right:1px}
button{display:block;width:86px;height:24px;border:1px solid #adadad;background:#e1e1e1;font:inherit;padding:0;color:#000}
step-mark{--frame:-3px -6px -4px -3px;--bx:-18px;--by:-2px}
.grip{position:absolute;right:0;bottom:0}
</style>
<div class="name"><label for="fn">檔案名稱(N):</label><div class="combo"><input id="fn" value="ECO_GenSpec_008.010.001.004.war"><ui-icon name="thin"></ui-icon></div></div>
<div class="type"><select aria-label="檔案類型"><option>所有檔案 (*.*)</option></select><ui-icon name="thin"></ui-icon></div>
<div class="btns"><step-mark n="3"><button>開啟(O)</button></step-mark><button>取消</button></div>
<ui-icon class="grip" name="grip"></ui-icon>`);

const TREE = [['cube', '3D 物件'], ['dl', '下載'], ['doc', '文件'], ['music', '音樂'], ['desk', '桌面'], ['pic', '圖片'], ['film', '影片'], ['boot', 'BOOT (C:)'], ['disk', 'DATAS (E:)'], ['server', '同仁$ (\\\\192.168.1.103) (H:)'], ['server', '部門區 (\\\\ds1517.arcare.com.tw) (J:)'], ['server', 'Kdata$ (\\\\192.168.1.103) (K:)'], ['server', 'share$ (\\\\udrive.arcare.com.tw) (U:)', 'selected'], ['net', '網路', 'root']];
define('folder-tree', `<style>
:host{display:block}
.row{display:flex;align-items:center;height:24px;padding-left:31px;gap:5px;margin-right:1px;white-space:nowrap}
.selected{background:#d9d9d9}
.root{padding-left:23px;margin-top:8px}
</style>`, (host, root) => {
  root.innerHTML += TREE.map(([icon, text, cls = '']) => `<div class="row ${cls}"><ui-icon name="${icon}"></ui-icon><span>${text}</span></div>`).join('');
});

define('file-dialog', `<style>
:host{display:flex;flex-direction:column;border:1px solid #2b5797;border-left-color:#999;background:#fff;box-shadow:0 4px 16px #0006;min-width:0}
header{display:flex;align-items:center;height:29px;padding:0 7px;gap:5px;color:#999}
header button{margin-left:auto}
button{border:0;background:none;padding:0;font:inherit;color:inherit}
.bar{display:flex;align-items:center;height:30px;padding:0 15px 0 17px;background:#f4f6f9;border-bottom:1px solid #e6e8ea;color:#1e395b}
.bar button{display:flex;align-items:center;gap:6px}
.new{margin-left:30px}
.view{margin-left:auto}.view button{gap:8px}
.right{display:flex;gap:20px;align-items:center;margin-left:22px}
.body{display:grid;grid-template-columns:289px 16px 1fr 17px;height:352px}
.list{display:flex;flex-direction:column;min-width:0}
.side{height:336px}
</style>
<header><ui-icon name="chrome"></ui-icon><span>開啟</span><button aria-label="關閉"><ui-icon name="wclose"></ui-icon></button></header>
<dialog-nav></dialog-nav>
<div class="bar"><button>組合管理<ui-icon name="caret"></ui-icon></button><button class="new">新增資料夾</button>
<div class="view"><button aria-label="檢視"><ui-icon name="view"></ui-icon><ui-icon name="caret"></ui-icon></button></div>
<div class="right"><button aria-label="預覽窗格"><ui-icon name="pane"></ui-icon></button><button aria-label="說明"><ui-icon name="help"></ui-icon></button></div></div>
<div class="body"><folder-tree></folder-tree>
<scroll-bar style="--before:168;--thumb:152;--after:0"><ui-icon slot="start" name="aup"></ui-icon><ui-icon slot="end" name="adown"></ui-icon></scroll-bar>
<div class="list"><file-list></file-list><scroll-bar horizontal style="--thumb:576;--after:9;margin-left:4px"><ui-icon slot="start" name="aleft"></ui-icon><ui-icon slot="end" name="aright"></ui-icon></scroll-bar></div>
<scroll-bar class="side" style="--before:45;--thumb:222;--after:37"><ui-icon slot="start" name="aup"></ui-icon><ui-icon slot="end" name="adown"></ui-icon></scroll-bar></div>
<dialog-footer></dialog-footer>`);

/* ---------- desktop: two overlapping windows ---------- */
define('desk-top', `<style>
:host{display:grid;grid-template-columns:minmax(0,1fr);min-height:100vh;overflow:hidden}
browser-window{grid-area:1/1;margin-right:355px}
file-dialog{grid-area:1/1;margin:297px 0 0 527px;align-self:start}
</style><browser-window></browser-window><file-dialog></file-dialog>`);
</script>
</body>
</html>
